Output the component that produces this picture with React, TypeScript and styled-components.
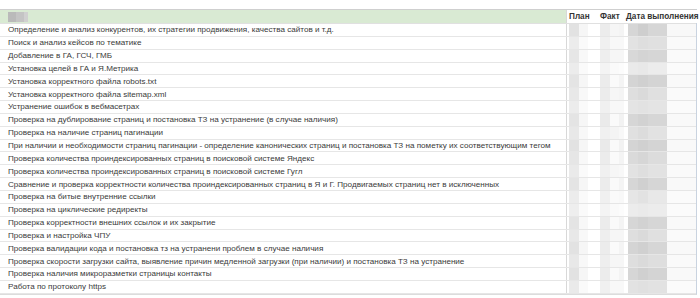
import styled, { createGlobalStyle } from "styled-components";

const GlobalStyle = createGlobalStyle`
  html, body {
    margin: 0;
    padding: 0;
    background: #ffffff;
    font-family: "Liberation Sans", Arial, sans-serif;
  }
`;

const tasks = [
  "Определение и анализ конкурентов, их стратегии продвижения, качества сайтов и т.д.",
  "Поиск и анализ кейсов по тематике",
  "Добавление в ГА, ГСЧ, ГМБ",
  "Установка целей в ГА и Я.Метрика",
  "Установка корректного файла robots.txt",
  "Установка корректного файла sitemap.xml",
  "Устранение ошибок в вебмасетрах",
  "Проверка на дублирование страниц и постановка ТЗ на устранение (в случае наличия)",
  "Проверка на наличие страниц пагинации",
  "При наличии и необходимости страниц пагинации - определение канонических страниц и постановка ТЗ на пометку их соответствующим тегом",
  "Проверка количества проиндексированных страниц в поисковой системе Яндекс",
  "Проверка количества проиндексированных страниц в поисковой системе Гугл",
  "Сравнение и проверка корректности количества проиндексированных страниц в Я и Г. Продвигаемых страниц нет в исключенных",
  "Проверка на битые внутренние ссылки",
  "Проверка на циклические редиректы",
  "Проверка корректности внешних ссылок и их закрытие",
  "Проверка и настройка ЧПУ",
  "Проверка валидации кода и постановка тз на устранени проблем в случае наличия",
  "Проверка скорости загрузки сайта, выявление причин медленной загрузки (при наличии) и постановка ТЗ на устранение",
  "Проверка наличия микроразметки страницы контакты",
  "Работа по протоколу https",
];

// pixelated (censored) blocks per row: [plan, fact, date]
const shades: number[][] = [
  [226, 246, 236, 246, 214, 206, 214, 248],
  [236, 250, 240, 248, 226, 222, 224, 250],
  [230, 248, 238, 246, 216, 212, 214, 250],
  [236, 250, 244, 250, 234, 232, 236, 251],
  [228, 246, 236, 250, 212, 208, 212, 249],
  [232, 248, 236, 246, 222, 218, 224, 250],
  [236, 250, 240, 248, 228, 226, 228, 251],
  [228, 246, 234, 250, 214, 210, 214, 249],
  [232, 248, 240, 244, 224, 220, 226, 250],
  [226, 246, 234, 250, 212, 208, 212, 249],
  [230, 248, 236, 250, 218, 214, 220, 250],
  [234, 250, 240, 246, 226, 222, 226, 250],
  [228, 246, 236, 250, 214, 208, 214, 249],
  [236, 250, 240, 250, 230, 226, 232, 251],
  [238, 250, 244, 250, 236, 234, 236, 251],
  [228, 248, 236, 250, 214, 210, 214, 249],
  [232, 248, 238, 246, 222, 218, 224, 250],
  [226, 246, 236, 250, 212, 208, 214, 249],
  [232, 248, 238, 246, 222, 218, 222, 250],
  [226, 246, 236, 250, 214, 208, 212, 249],
  [234, 250, 240, 248, 226, 224, 226, 251],
];

const g = (v: number) => `rgb(${v},${v},${v})`;

export default function App() {
  return (
    <>
      <GlobalStyle />
      <Page>
        <Table>
          <HeadRow>
            <TaskCell>
              <Censor>
                <Block $w={8} $c={g(186)} />
                <Block $w={8} $c={g(196)} />
                <Block $w={4} $c={g(208)} />
              </Censor>
            </TaskCell>
            <HeadCell>План</HeadCell>
            <HeadCell>Факт</HeadCell>
            <HeadCell>Дата выполнения</HeadCell>
          </HeadRow>
          {tasks.map((t, i) => {
            const s = shades[i];
            return (
              <Row key={i}>
                <TaskCell>{t}</TaskCell>
                <ValueCell>
                  <Block $w={10} $c={g(s[0])} />
                  <Block $w={9} $c={g(s[1])} />
                </ValueCell>
                <ValueCell>
                  <Block $w={10} $c={g(s[2])} />
                  <Block $w={9} $c={g(s[3])} />
                  <Block $w={6} $c={g(Math.min(252, s[2] + 8))} />
                </ValueCell>
                <ValueCell $pad={4}>
                  <Block $w={10} $c={g(s[4])} />
                  <Block $w={10} $c={g(s[5])} />
                  <Block $w={19} $c={g(s[6])} />
                  <Block $w={29} $c={g(s[7])} />
                </ValueCell>
              </Row>
            );
          })}
        </Table>
      </Page>
    </>
  );
}

const Page = styled.div`
  width: 700px;
  height: 298px;
  padding-top: 9px;
  box-sizing: border-box;
  overflow: hidden;
`;

const Table = styled.div`
  width: 697px;
  border-top: 1px solid #cfcfcf;
  border-right: 1px solid #c9d3e0;
  border-bottom: 1px solid #dcdcdc;
  box-sizing: border-box;
`;

const Row = styled.div`
  display: grid;
  grid-template-columns: 567px 31px 26px 1fr;
  height: 12.85px;
  border-bottom: 1px solid #e6e6e6;
  box-sizing: border-box;
`;

const HeadRow = styled(Row)`
  height: 14px;
  background: #d9ead3;
  border-bottom: 1px solid #e0e0e0;
`;

const TaskCell = styled.div`
  display: flex;
  align-items: center;
  padding-left: 8px;
  font-size: 8.1px;
  color: #3a3a3a;
  white-space: nowrap;
  overflow: hidden;
  border-right: 1px solid #d8d8d8;
`;

const HeadCell = styled.div`
  display: flex;
  align-items: center;
  padding-left: 2px;
  font-size: 8.2px;
  font-weight: bold;
  color: #333333;
  white-space: nowrap;
  background: #ffffff;
`;

const ValueCell = styled.div<{ $pad?: number }>`
  display: flex;
  padding-left: ${(p) => p.$pad ?? 2}px;
  overflow: hidden;
`;

const Censor = styled.div`
  display: flex;
  height: 10px;
`;

const Block = styled.span<{ $w: number; $c: string }>`
  display: block;
  flex: 0 0 ${(p) => p.$w}px;
  height: 100%;
  background: ${(p) => p.$c};
`;
